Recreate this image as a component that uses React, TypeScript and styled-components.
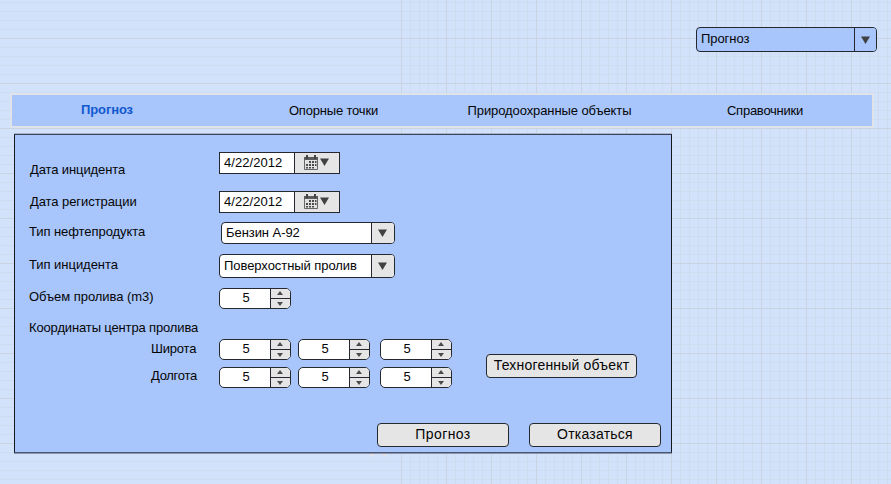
import React from "react";
import styled, { createGlobalStyle } from "styled-components";

const INK = "#25282f";
const BLUE = "#a8c5fc";
const GREY = "#e5e5e5";

const GlobalStyle = createGlobalStyle`
  *, *::before, *::after { box-sizing: border-box; }
  body { margin: 0; overflow: hidden; }
`;

const Page = styled.main`
  display: flex;
  flex-direction: column;
  width: 891px;
  height: 484px;
  padding-top: 27px;
  overflow: hidden;
  font: 13px/15px "Liberation Sans", Arial, sans-serif;
  color: #050505;
  white-space: nowrap;
  background-color: #d3e2fb;
  background-image:
    repeating-linear-gradient(to right, #cad3e1 0 1px, transparent 1px 45px),
    repeating-linear-gradient(to bottom, #cad3e1 0 1px, transparent 1px 45px),
    repeating-linear-gradient(to right, #cfdcef 0 1px, transparent 1px 9px),
    repeating-linear-gradient(to bottom, #cfdcef 0 1px, transparent 1px 9px);
  background-size: 490px 100%, 100% 495px, 490px 100%, 100% 495px;
  background-position: 401px 0, 0 -7px, 401px 0, 0 -7px;
  background-repeat: no-repeat;
`;

const TopBar = styled.header`
  display: flex;
  justify-content: flex-end;
  padding-right: 14px;
`;

const SelectBox = styled.div<{ $width: number; $height: number; $tone?: string; $inset?: number }>`
  display: flex;
  width: ${(p) => p.$width}px;
  height: ${(p) => p.$height}px;
  margin-left: ${(p) => p.$inset ?? 0}px;
  border: 1px solid ${INK};
  border-radius: 4px;
  overflow: hidden;
  background: ${(p) => p.$tone ?? "#fff"};
`;

const SelectText = styled.span<{ $top: number }>`
  flex: 1;
  padding: ${(p) => p.$top}px 0 0 4px;
  letter-spacing: -0.06px;
`;

const SelectArrow = styled.span<{ $tone?: string }>`
  display: flex;
  align-items: center;
  justify-content: center;
  width: ${(p) => (p.$tone ? 22 : 23)}px;
  padding-right: 1px;
  border-left: 1px solid ${INK};
  background: ${(p) => p.$tone ?? GREY};
`;

const Nav = styled.nav`
  display: grid;
  grid-template-columns: repeat(4, 1fr);
  width: 862px;
  height: 33px;
  margin: 42px 0 0 11px;
  border: 1px solid #e3e3e4;
  box-shadow: 0 0 0 1px rgba(229, 229, 229, 0.5);
  background: ${BLUE};
`;

const NavItem = styled.a<{ $active?: boolean; $spacing: number; $shift?: number }>`
  padding: ${(p) => (p.$active ? 7 : 8)}px ${(p) => Math.max(0, -(p.$shift ?? 0))}px 0
    ${(p) => Math.max(0, p.$shift ?? 0)}px;
  text-align: center;
  letter-spacing: ${(p) => p.$spacing}px;
  font-weight: ${(p) => (p.$active ? 700 : 400)};
  color: ${(p) => (p.$active ? "#1259cf" : "inherit")};
`;

const Panel = styled.section`
  display: flex;
  flex-direction: column;
  justify-content: space-between;
  flex-shrink: 0;
  width: 658px;
  height: 319px;
  margin: 7px 0 0 14px;
  padding: 17px 10px 5px 0;
  border: 1px solid #16181d;
  border-top-color: #3c4557;
  border-bottom-color: #4a566e;
  box-shadow: 0 -1px #a9b4c8, 0 1px #8996ad;
  background: ${BLUE};
`;

const Body = styled.div`
  display: flex;
  align-items: flex-start;
`;

const Form = styled.div`
  display: grid;
  grid-template-columns: 204px 233px;
  grid-template-rows: 39px 31px 32px 34px 29px 22px 28px 22px;
  align-items: start;
`;

const Label = styled.label<{ $top: number; $left?: number; $spacing?: number }>`
  padding: ${(p) => p.$top}px 0 0 ${(p) => p.$left ?? 14}px;
  letter-spacing: ${(p) => p.$spacing ?? -0.11}px;
`;

const DateBox = styled.div`
  display: flex;
  width: 121px;
  height: 22px;
  border: 1px solid ${INK};
  background: #fff;
`;

const DateText = styled.span`
  width: 74px;
  padding: 2px 0 0 4px;
  letter-spacing: 0.05px;
`;

const DateTrigger = styled.span`
  display: flex;
  flex: 1;
  gap: 2px;
  padding: 2px 0 0 9px;
  border-left: 1px solid ${INK};
  background: ${GREY};

  svg:last-child { margin-top: 3px; }
`;

const SpinnerPair = styled.div`
  display: flex;
  gap: 7px;

  > :nth-child(3) { margin-left: 3px; }
`;

const SpinnerBox = styled.div`
  display: flex;
  width: 72px;
  height: 21px;
  border: 1px solid ${INK};
  border-radius: 5px;
  overflow: hidden;
  background: #fff;
`;

const SpinnerValue = styled.span`
  flex: 1;
  padding: 1px 0 0 2px;
  text-align: center;
`;

const Steps = styled.span`
  display: grid;
  grid-template-rows: 10px 9px;
  width: 20px;
  border-left: 1px solid ${INK};
  background: ${GREY};
`;

const Step = styled.span<{ $up?: boolean }>`
  display: flex;
  justify-content: center;
  padding: ${(p) => (p.$up ? 2 : 3)}px 1px 0 0;
  border-bottom: ${(p) => (p.$up ? `1px solid ${INK}` : "none")};
`;

const Button = styled.button<{ $width: number; $spacing: number }>`
  width: ${(p) => p.$width}px;
  height: 24px;
  padding: 2px 0 4px;
  border: 1px solid ${INK};
  border-radius: 4px;
  background: ${GREY};
  color: inherit;
  font: 14px/16px "Liberation Sans", Arial, sans-serif;
  letter-spacing: ${(p) => p.$spacing}px;
`;

const SideAction = styled.div`
  padding: 202px 0 0 34px;
`;

const Footer = styled.footer`
  display: flex;
  justify-content: flex-end;
  gap: 20px;
`;

const Marks = styled.svg`
  display: block;
  flex-shrink: 0;
  margin: 1px 0 0 369px;
`;

const Arrow = () => (
  <svg width="9" height="8" viewBox="0 0 9 8">
    <path d="M0 .4h9L4.5 8z" fill="#414141" />
  </svg>
);

const SmallArrow = ({ up }: { up?: boolean }) => (
  <svg width="6" height="4" viewBox="0 0 6 4">
    <path d={up ? "M0 4h6L3 0z" : "M0 0h6L3 4z"} fill="#4b4b4b" />
  </svg>
);

const CalendarIcon = () => (
  <svg width="14" height="15" viewBox="0 0 14 15">
    <path d="M.5 2.5h13v12H.5z" fill="#e2e2e2" stroke="#686868" />
    <path d="M0 2h14v3H0z" fill="#5c5c5c" />
    <path d="M2 0h2v4H2zM10 0h2v4h-2z" fill="#444" />
    <path
      d="M5 6h2v2H5zM8 6h2v2H8zM11 6h1.5v2H11zM2 9h2v2H2zM5 9h2v2H5zM8 9h2v2H8zM11 9h1.5v2H11zM2 12h2v1.5H2zM5 12h2v1.5H5zM8 12h2v1.5H8z"
      fill="#4a4a4a"
    />
  </svg>
);

const DateField = () => (
  <DateBox>
    <DateText>4/22/2012</DateText>
    <DateTrigger>
      <CalendarIcon />
      <Arrow />
    </DateTrigger>
  </DateBox>
);

const Spinner = () => (
  <SpinnerBox>
    <SpinnerValue>5</SpinnerValue>
    <Steps>
      <Step $up><SmallArrow up /></Step>
      <Step><SmallArrow /></Step>
    </Steps>
  </SpinnerBox>
);

export default function App() {
  return (
    <>
      <GlobalStyle />
      <Page>
        <TopBar>
          <SelectBox $width={181} $height={25} $tone={BLUE}>
            <SelectText $top={3}>Прогноз</SelectText>
            <SelectArrow $tone={BLUE}><Arrow /></SelectArrow>
          </SelectBox>
        </TopBar>
        <Nav>
          <NavItem $active $spacing={-0.12} $shift={-25}>Прогноз</NavItem>
          <NavItem $spacing={-0.18} $shift={-2}>Опорные точки</NavItem>
          <NavItem $spacing={-0.1}>Природоохранные объекты</NavItem>
          <NavItem $spacing={-0.25} $shift={1}>Справочники</NavItem>
        </Nav>
        <Panel>
          <Body>
            <Form>
              <Label $top={10} $left={15}>Дата инцидента</Label>
              <DateField />
              <Label $top={3} $left={15} $spacing={-0.07}>Дата регистрации</Label>
              <DateField />
              <Label $top={2} $spacing={-0.07}>Тип нефтепродукта</Label>
              <SelectBox $width={174} $height={22} $inset={2}>
                <SelectText $top={2}>Бензин А-92</SelectText>
                <SelectArrow><Arrow /></SelectArrow>
              </SelectBox>
              <Label $top={3} $spacing={-0.04}>Тип инцидента</Label>
              <SelectBox $width={176} $height={24}>
                <SelectText $top={3}>Поверхостный пролив</SelectText>
                <SelectArrow><Arrow /></SelectArrow>
              </SelectBox>
              <Label $top={1} $spacing={-0.05}>Объем пролива (m3)</Label>
              <Spinner />
              <Label $top={3} $left={14} $spacing={-0.14}>Координаты центра пролива</Label>
              <span />
              <Label $top={2} $left={136} $spacing={-0.2}>Широта</Label>
              <SpinnerPair><Spinner /><Spinner /><Spinner /></SpinnerPair>
              <Label $top={1} $left={136} $spacing={-0.3}>Долгота</Label>
              <SpinnerPair><Spinner /><Spinner /><Spinner /></SpinnerPair>
            </Form>
            <SideAction>
              <Button $width={151} $spacing={0.19}>Техногенный объект</Button>
            </SideAction>
          </Body>
          <Footer>
            <Button $width={132} $spacing={0.4}>Прогноз</Button>
            <Button $width={132} $spacing={0.23}>Отказаться</Button>
          </Footer>
        </Panel>
        <Marks width="18" height="4" viewBox="0 0 18 4">
          <path d="M2 0h4L0 3zM12 0h4l2 3z" fill="#efe2dc" />
        </Marks>
      </Page>
    </>
  );
}
